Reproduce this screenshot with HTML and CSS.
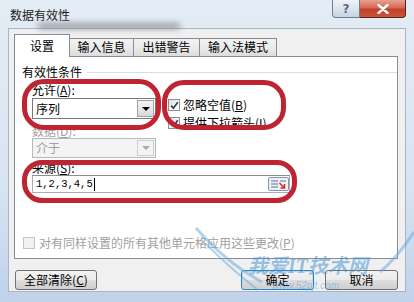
FILE: index.html
```html
<!DOCTYPE html>
<html lang="zh-CN">
<head>
    <meta charset="UTF-8">
    <title>数据有效性</title>
    <link rel="stylesheet" href="styles.css">
</head>
<body>

<div class="window">
    <div class="titlebar">
        <div class="title">数据有效性</div>
        <div class="caption">
            <div class="cap-btn help">?</div>
            <div class="cap-btn close">
                <svg width="12" height="10" viewBox="0 0 12 10">
                    <path d="M1.5 1 L10.5 9 M10.5 1 L1.5 9" stroke="#fff" stroke-width="2.4" stroke-linecap="round"/>
                </svg>
            </div>
        </div>
    </div>

    <div class="client">
        <div class="tabs">
            <div class="tab active">设置</div>
            <div class="tab t-info">输入信息</div>
            <div class="tab t-warn">出错警告</div>
            <div class="tab t-ime">输入法模式</div>
        </div>

        <div class="panel">
            <div class="group-title">
                <span>有效性条件</span>
                <i class="rule"></i>
            </div>

            <div class="cond">
                <div class="cond-left">
                    <div class="label">允许(<u>A</u>):</div>
                    <div class="combo">
                        <span class="combo-text">序列</span>
                        <span class="drop"><i class="arrow"></i></span>
                    </div>
                    <div class="label disabled gap-top">数据(<u>D</u>):</div>
                    <div class="combo off">
                        <span class="combo-text">介于</span>
                        <span class="drop"><i class="arrow"></i></span>
                    </div>
                </div>
                <div class="cond-right">
                    <div class="check">
                        <span class="box">
                            <svg width="9" height="9" viewBox="0 0 9 9"><path d="M1.2 4.6 L3.4 7.2 L7.8 1.2" stroke="#2c3f5c" stroke-width="1.7" fill="none"/></svg>
                        </span>
                        <span>忽略空值(<u>B</u>)</span>
                    </div>
                    <div class="check">
                        <span class="box">
                            <svg width="9" height="9" viewBox="0 0 9 9"><path d="M1.2 4.6 L3.4 7.2 L7.8 1.2" stroke="#2c3f5c" stroke-width="1.7" fill="none"/></svg>
                        </span>
                        <span>提供下拉箭头(<u>I</u>)</span>
                    </div>
                </div>
            </div>

            <div class="label src-label">来源(<u>S</u>):</div>
            <div class="source">
                <span class="source-text">1,2,3,4,5</span><i class="caret"></i>
                <span class="ref-btn">
                    <svg width="21" height="14" viewBox="0 0 21 14">
                        <rect x="0.5" y="0.5" width="20" height="13" rx="1.5" fill="#eef2f7" stroke="#8397b0"/>
                        <path d="M3 4h7M3 7h7M3 10h7M12 4h6" stroke="#5d7290"/>
                        <path d="M11.5 6 L16 10.5 M16.5 7 V11 H12.5" stroke="#d0312d" stroke-width="1.6" fill="none"/>
                    </svg>
                </span>
            </div>

            <div class="check apply">
                <span class="box empty"></span>
                <span>对有同样设置的所有其他单元格应用这些更改(<u>P</u>)</span>
            </div>
        </div>

        <div class="footer">
            <button class="btn btn-clear">全部清除(<u>C</u>)</button>
            <div class="footer-right">
                <button class="btn btn-default">确定</button>
                <button class="btn">取消</button>
            </div>
        </div>
    </div>

    <!-- screenshot annotations -->
    <div class="smudge"></div>
    <div class="mark mark-allow"></div>
    <div class="mark mark-checks"></div>
    <div class="mark mark-source"></div>

    <div class="watermark">
        <svg class="swoosh" width="414" height="302" viewBox="0 0 414 302">
            <path d="M196 228 C215 250 236 268 262 282" stroke="#6aa6dc" stroke-width="3" fill="none"/>
            <path d="M206 244 C224 262 240 276 258 290" stroke="#6aa6dc" stroke-width="2" fill="none"/>
            <path d="M414 232 C402 250 392 262 380 272" stroke="#6aa6dc" stroke-width="3" fill="none"/>
        </svg>
        <span class="wm-title">我爱IT技术网</span>
        <span class="wm-url">www.52pjt.com</span>
    </div>
</div>

</body>
</html>
```

FILE: styles.css
```css
* {
    box-sizing: border-box;
}

body {
    margin: 0;
    font-family: "Noto Sans CJK SC", "Noto Sans", sans-serif;
    font-size: 12px;
    color: #000;
}

.window {
    position: relative;
    width: 414px;
    height: 302px;
    overflow: hidden;
    background: linear-gradient(180deg, #e4ecf5 0%, #d9e4f1 60%, #bfd2ea 100%);
}

/* title bar */

.titlebar {
    height: 28px;
    display: flex;
    justify-content: space-between;
    align-items: flex-start;
}

.title {
    padding: 8px 0 0 10px;
    line-height: 14px;
    color: #1b1b1b;
}

.caption {
    display: flex;
    margin-right: 8px;
}

.cap-btn {
    height: 18px;
    display: flex;
    align-items: center;
    justify-content: center;
}

.help {
    width: 28px;
    border: 1px solid #6f7d90;
    border-top: none;
    border-radius: 0 0 0 4px;
    background: linear-gradient(180deg, #eef3f8 0%, #dbe4ee 50%, #c7d3e2 100%);
    color: #5a6b82;
    font-family: "DejaVu Sans", sans-serif;
    font-weight: bold;
    font-size: 12px;
}

.close {
    width: 46px;
    border: 1px solid #5b2318;
    border-top: none;
    border-left: none;
    border-radius: 0 0 4px 0;
    background: linear-gradient(180deg, #e8a292 0%, #d46a53 45%, #c2402a 55%, #c9543b 100%);
}

/* client area */

.client {
    margin: 0 8px;
    height: 264px;
    border: 1px solid #a5b6cb;
    background: #f0f0f0;
    padding: 5px 7px 0 5px;
}

.tabs {
    display: flex;
    align-items: flex-end;
    height: 22px;
    position: relative;
    z-index: 1;
}

.tab {
    height: 18px;
    border: 1px solid #898c95;
    border-bottom: none;
    margin-left: -1px;
    background: linear-gradient(180deg, #f3f3f3 0%, #ebebeb 50%, #dcdcdc 100%);
    text-align: center;
    line-height: 16px;
    color: #000;
}

.tab.active {
    margin-left: 0;
    width: 56px;
    height: 23px;
    margin-bottom: -1px;
    background: #fff;
    line-height: 18px;
    padding-top: 2px;
    position: relative;
    z-index: 2;
}

.t-info { width: 65px; }
.t-warn { width: 67px; }
.t-ime { width: 78px; }

.panel {
    height: 203px;
    background: #fff;
    border: 1px solid #898c95;
    padding: 8px 0 0 7px;
}

.group-title {
    display: flex;
    align-items: center;
    height: 14px;
    line-height: 14px;
}

.rule {
    flex: 1;
    margin-left: 5px;
    border-top: 1px solid #d5dfe5;
}

.label {
    height: 14px;
    line-height: 14px;
}

.label.disabled {
    color: #a0a0a0;
}

.cond {
    display: flex;
    margin: 4px 0 0 10px;
}

.cond-left {
    width: 124px;
}

.cond-right {
    margin-left: 12px;
    padding-top: 13px;
}

.combo {
    margin-top: 1px;
    height: 21px;
    border: 1px solid #7a7a7a;
    background: #fff;
    display: flex;
    align-items: stretch;
}

.combo-text {
    flex: 1;
    padding-left: 3px;
    line-height: 19px;
}

.drop {
    width: 17px;
    margin: 1px;
    border: 1px solid #a3a3a3;
    background: linear-gradient(180deg, #f4f4f4 0%, #e8e8e8 50%, #d8d8d8 100%);
    display: flex;
    align-items: center;
    justify-content: center;
}

.arrow {
    width: 0;
    height: 0;
    border-left: 4px solid transparent;
    border-right: 4px solid transparent;
    border-top: 4px solid #000;
}

.gap-top {
    margin-top: 5px;
}

.combo.off {
    margin-top: 0;
    height: 20px;
    border-color: #b5b8bc;
    background: #f4f4f4;
    color: #a0a0a0;
}

.combo.off .combo-text {
    line-height: 18px;
}

.combo.off .drop {
    border-color: #d0d0d0;
    background: #f4f4f4;
}

.combo.off .arrow {
    border-top-color: #a8a8a8;
}

.check {
    display: flex;
    align-items: center;
    height: 18px;
    line-height: 14px;
}

.box {
    width: 12px;
    height: 12px;
    margin-right: 3px;
    border: 1px solid #8e8f8f;
    background: linear-gradient(135deg, #dcdcdc 0%, #f6f6f6 60%, #fff 100%);
    display: flex;
    align-items: center;
    justify-content: center;
}

.box.empty {
    border-color: #c4c4c4;
    background: #f2f2f2;
}

.src-label {
    margin: 3px 0 0 10px;
}

.source {
    margin-left: 10px;
    width: 258px;
    height: 18px;
    border: 1px solid #abadb3;
    border-top-color: #8a8d94;
    display: flex;
    align-items: center;
    padding-left: 3px;
}

.source-text {
    font-family: "Liberation Mono", monospace;
    font-size: 10.5px;
}

.caret {
    width: 1px;
    height: 13px;
    margin-left: 1px;
    background: #000;
}

.ref-btn {
    margin-left: auto;
    display: flex;
}

.check.apply {
    margin: 41px 0 0 1px;
    color: #a0a0a0;
}

.check.apply .box {
    margin-right: 4px;
}

/* footer buttons */

.footer {
    display: flex;
    justify-content: space-between;
    margin-top: 11px;
}

.footer-right {
    display: flex;
    gap: 11px;
}

.btn {
    height: 20px;
    width: 73px;
    border: 1px solid #707070;
    border-radius: 3px;
    background: linear-gradient(180deg, #f2f2f2 0%, #ebebeb 48%, #dddddd 52%, #cfcfcf 100%);
    font-family: inherit;
    font-size: 12px;
    line-height: 16px;
    padding: 0;
    color: #000;
}

.btn-clear {
    margin-left: 1px;
    width: 82px;
}

.btn-default {
    border-color: #3c7fb1;
    box-shadow: inset 0 0 0 1px #b4dcf2;
}

/* overlays drawn on the screenshot */

.smudge {
    position: absolute;
    left: 38px;
    top: 23px;
    width: 142px;
    height: 6px;
    background: #7c7f84;
    filter: blur(3px);
    opacity: 0.75;
}

.mark {
    position: absolute;
    border: 5px solid #be2431;
    border-radius: 22px;
}

.mark-allow {
    left: 22px;
    top: 79px;
    width: 139px;
    height: 51px;
}

.mark-checks {
    left: 162px;
    top: 80px;
    width: 124px;
    height: 50px;
}

.mark-source {
    left: 22px;
    top: 160px;
    width: 275px;
    height: 43px;
    border-radius: 20px;
}

.watermark {
    position: absolute;
    inset: 0;
    pointer-events: none;
    opacity: 0.5;
}

.swoosh {
    position: absolute;
    left: 0;
    top: 0;
}

.wm-title {
    position: absolute;
    left: 248px;
    top: 250px;
    font-family: "Liberation Serif", "Noto Sans CJK SC", serif;
    font-size: 20px;
    font-weight: bold;
    font-style: italic;
    color: #3f8fd6;
    white-space: nowrap;
}

.wm-url {
    position: absolute;
    left: 272px;
    top: 280px;
    font-family: "Liberation Sans", sans-serif;
    font-size: 10px;
    font-style: italic;
    color: #5aa0de;
}
```
